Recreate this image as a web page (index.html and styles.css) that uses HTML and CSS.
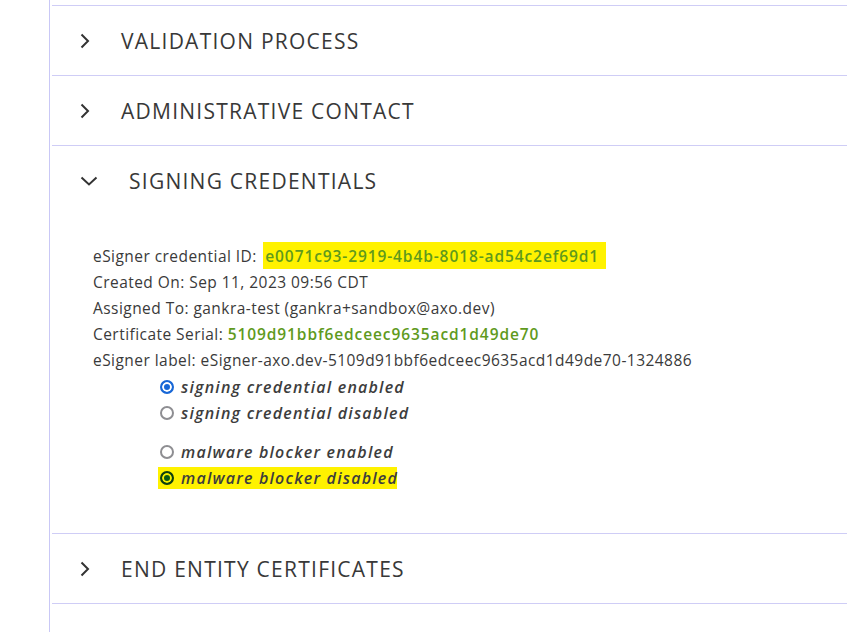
FILE: index.html
```html
<!DOCTYPE html>
<html lang="en">
<head>
<meta charset="utf-8">
<title>Certificate details</title>
<link rel="stylesheet" href="styles.css">
</head>
<body>
<div class="page">
  <div class="panel">
    <div class="section section-prev"></div>

    <div class="section">
      <div class="header">
        <svg class="chev chev-right" viewBox="0 0 10 16" width="10" height="16"><path d="M1.5 1.5 L8 8 L1.5 14.5" fill="none" stroke="#333" stroke-width="2"/></svg>
        <span class="title">VALIDATION PROCESS</span>
      </div>
    </div>

    <div class="section">
      <div class="header">
        <svg class="chev chev-right" viewBox="0 0 10 16" width="10" height="16"><path d="M1.5 1.5 L8 8 L1.5 14.5" fill="none" stroke="#333" stroke-width="2"/></svg>
        <span class="title">ADMINISTRATIVE CONTACT</span>
      </div>
    </div>

    <div class="section">
      <div class="header header-open">
        <svg class="chev chev-down" viewBox="0 0 18 10" width="18" height="10"><path d="M1.5 1.5 L9 8.5 L16.5 1.5" fill="none" stroke="#333" stroke-width="2"/></svg>
        <span class="title">SIGNING CREDENTIALS</span>
      </div>
      <div class="body">
        <div class="info">
          <div class="line">eSigner credential ID: <mark class="hl value">e0071c93-2919-4b4b-8018-ad54c2ef69d1</mark></div>
          <div class="line">Created On: Sep 11, 2023 09:56 CDT</div>
          <div class="line">Assigned To: gankra-test (gankra+sandbox@axo.dev)</div>
          <div class="line">Certificate Serial: <span class="value">5109d91bbf6edceec9635acd1d49de70</span></div>
          <div class="line">eSigner label: eSigner-axo.dev-5109d91bbf6edceec9635acd1d49de70-1324886</div>
        </div>
        <div class="radios">
          <div class="radio"><span class="dot dot-on"></span><span class="label">signing credential enabled</span></div>
          <div class="radio"><span class="dot"></span><span class="label">signing credential disabled</span></div>
        </div>
        <div class="radios">
          <div class="radio"><span class="dot"></span><span class="label">malware blocker enabled</span></div>
          <div class="radio radio-hl"><span class="dot dot-hl"></span><span class="label">malware blocker disabled</span></div>
        </div>
      </div>
    </div>

    <div class="section">
      <div class="header">
        <svg class="chev chev-right" viewBox="0 0 10 16" width="10" height="16"><path d="M1.5 1.5 L8 8 L1.5 14.5" fill="none" stroke="#333" stroke-width="2"/></svg>
        <span class="title">END ENTITY CERTIFICATES</span>
      </div>
    </div>
  </div>
</div>
</body>
</html>
```

FILE: styles.css
```css
html, body {
  margin: 0;
  padding: 0;
  background: #fff;
}

body {
  font-family: "Open Sans", "DejaVu Sans", sans-serif;
  color: #3a3a3a;
}

.page {
  padding-left: 49px;
  min-height: 632px;
  box-sizing: border-box;
}

.panel {
  border-left: 1px solid #c9c8f6;
  min-height: 632px;
  padding-left: 2px;
}

.section {
  border-bottom: 1px solid #cfcdf6;
}

.section-prev {
  height: 5px;
}

.header {
  height: 69px;
  display: flex;
  align-items: center;
  padding-left: 28px;
}

.chev-right {
  margin-right: 31px;
}

.chev-down {
  margin-right: 31px;
}

.title {
  font-size: 21px;
  font-weight: 500;
  letter-spacing: 1.25px;
  color: #383838;
}

.body {
  padding: 28px 0 42px 41px;
}

.line {
  height: 26px;
  line-height: 26px;
  font-size: 15.5px;
  letter-spacing: 0.45px;
  white-space: nowrap;
}

.hl {
  background: #fff200;
  padding: 3px 7px 2px 2px;
  margin-left: 2px;
}

.value {
  color: #5f9a1d;
  font-weight: 600;
  letter-spacing: 0.9px;
}

.radios {
  padding-left: 67px;
  margin-top: 1px;
}

.radios + .radios {
  margin-top: 13px;
}

.radio {
  height: 26px;
  display: flex;
  align-items: center;
  gap: 7px;
}

.dot {
  width: 14px;
  height: 14px;
  box-sizing: border-box;
  border-radius: 50%;
  border: 2px solid #8e8e92;
  background: #fff;
  flex: none;
}

.dot-on {
  border: 2px solid #1867d6;
  box-shadow: inset 0 0 0 2px #fff;
  background: #1867d6;
}

.dot-hl {
  border: 2px solid #0f3f0f;
  box-shadow: inset 0 0 0 2px #f7f000;
  background: #0a5a12;
}

.radio-hl {
  background: #fff200;
  width: 237px;
  margin-left: -2px;
  padding-left: 2px;
  height: 22px;
  margin-top: 2px;
  margin-bottom: 2px;
}

.label {
  font-size: 16px;
  font-style: italic;
  font-weight: 600;
  letter-spacing: 1.2px;
  color: #3d3d3d;
  white-space: nowrap;
}
```
